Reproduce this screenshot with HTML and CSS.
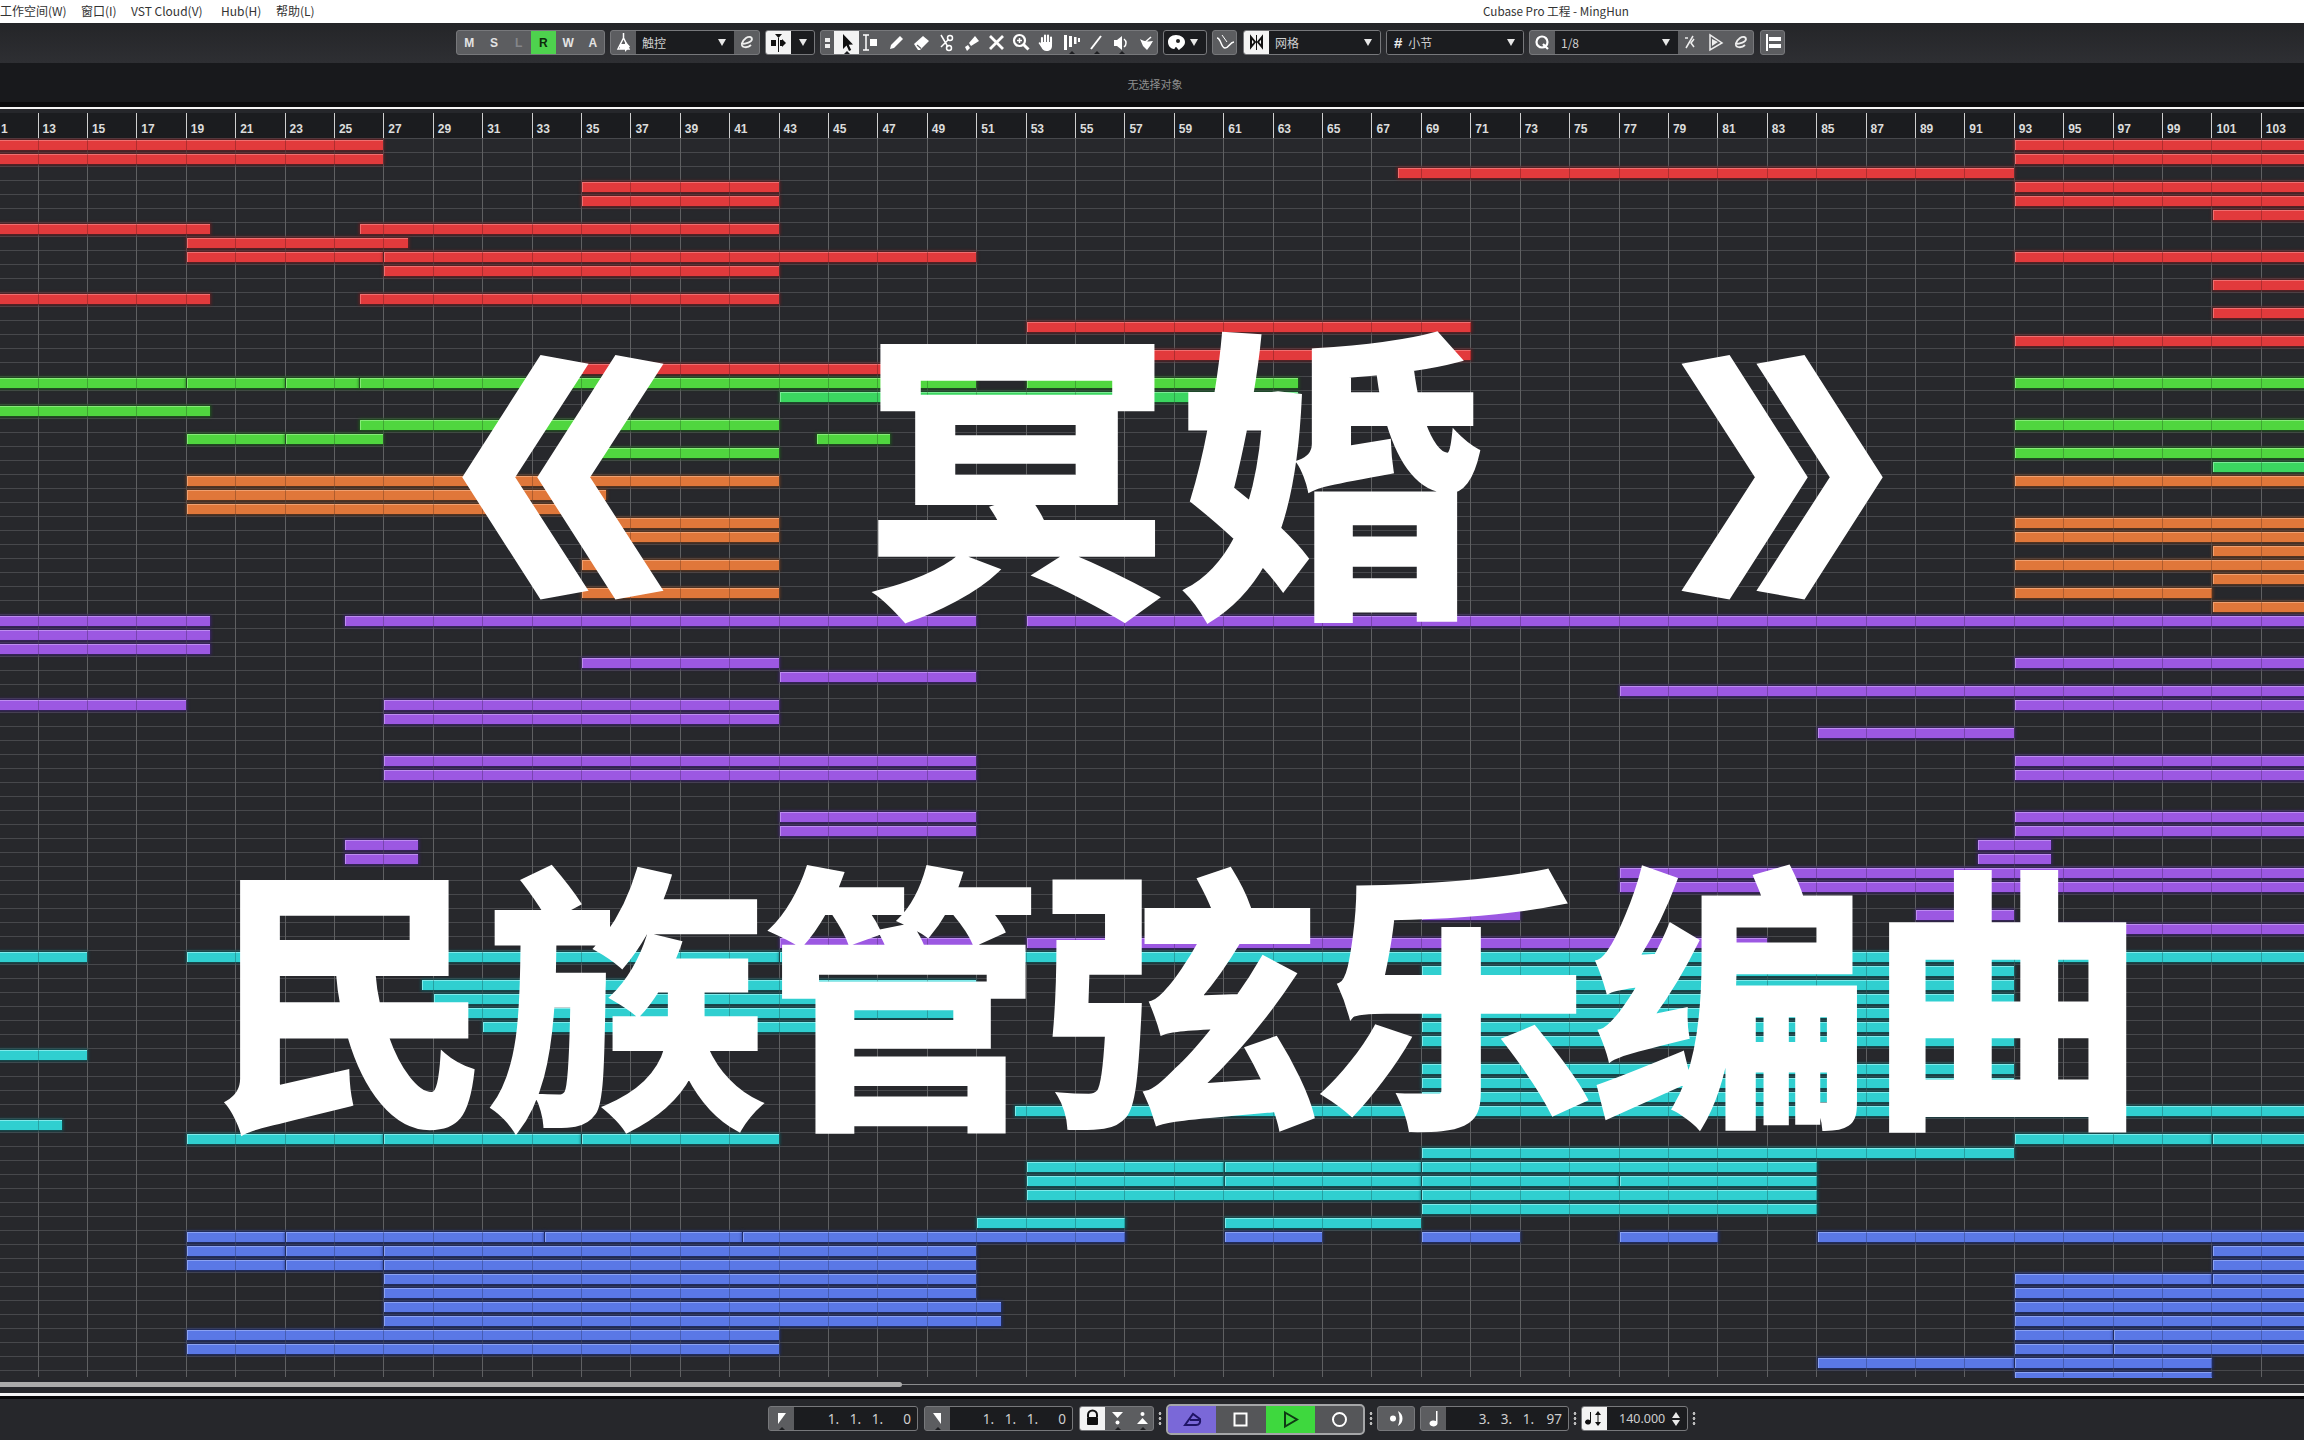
FILE: index.html
```html
<!DOCTYPE html>
<html lang="zh-CN">
<head>
    <meta charset="UTF-8">
    <title>Cubase Pro 工程 - MingHun</title>
    <link rel="stylesheet" href="styles.css">
</head>
<body>
    <div class="window">
        <div class="menubar">
            <span class="menu m1">工作空间(W)</span>
            <span class="menu m2">窗口(I)</span>
            <span class="menu m3">VST Cloud(V)</span>
            <span class="menu m4">Hub(H)</span>
            <span class="menu m5">帮助(L)</span>
            <span class="app-title">Cubase Pro 工程 - MingHun</span>
        </div>

        <div class="toolbar">
            <div class="group w-msl">
                <span class="cell letter">M</span><span class="cell letter">S</span><span class="cell letter dim">L</span><span class="cell letter on">R</span><span class="cell letter">W</span><span class="cell letter">A</span>
            </div>
            <div class="group w-touch">
                <span class="cell"><svg width="25" height="25" viewBox="0 0 25 25"><path d="M12.5 3v6M12.5 8L7 19h11z" fill="none" stroke="#fff" stroke-width="1.5"/><path d="M9 14h5v-3l5 5.5-5 5.500v-3H9z" fill="#fff"/></svg></span>
                <span class="field grow">触控<i class="caret"></i></span>
                <span class="cell"><svg width="25" height="25" viewBox="0 0 25 25"><path d="M7 14c5 0 11-2 11-5 0-2-3-3-6-1-4 3-6 8-2 9 3 .7 6-1 7-2" fill="none" stroke="#eee" stroke-width="1.8"/></svg></span>
            </div>
            <div class="group w-split">
                <span class="cell white"><svg width="25" height="25" viewBox="0 0 25 25"><path d="M9 4h7l-3.500 4zM12 8h1v14h-1z" fill="#111"/><rect x="5" y="10" width="5" height="6" fill="#111"/><path d="M14 10h2v-1l4 4-4 4v-1h-2z" fill="#111"/></svg></span>
                <span class="field grow center"><i class="caret solo"></i></span>
            </div>
            <div class="group w-tools">
                <span class="cell handle"><i></i><i></i></span>
                <span class="cell white notch"><svg width="25" height="25" viewBox="0 0 25 25"><path d="M9 4v15l3.500-3.500 2.500 5.500 2.200-1-2.500-5.200 4.300-.3z" fill="#111"/></svg></span>
                <span class="cell"><svg width="25" height="25" viewBox="0 0 25 25"><path d="M4 5h6M7 5v15M4 20h6" fill="none" stroke="#fff" stroke-width="1.500"/><rect x="11" y="9" width="7" height="7" fill="#fff"/></svg></span>
                <span class="cell"><svg width="25" height="25" viewBox="0 0 25 25"><path d="M6 19l1-4 9-9 3 3-9 9z" fill="#fff"/></svg></span>
                <span class="cell"><svg width="25" height="25" viewBox="0 0 25 25"><path d="M5 14l9-8 6 5-9 9h-2z" fill="#fff"/><path d="M8 15l4 3.500" stroke="#5c5d60" stroke-width="1.200"/></svg></span>
                <span class="cell"><svg width="25" height="25" viewBox="0 0 25 25"><circle cx="16" cy="8" r="2.500" fill="none" stroke="#fff" stroke-width="1.500"/><circle cx="15" cy="18" r="2.500" fill="none" stroke="#fff" stroke-width="1.500"/><path d="M7 5l7 12M7 17l8-8" stroke="#fff" stroke-width="1.500"/></svg></span>
                <span class="cell"><svg width="25" height="25" viewBox="0 0 25 25"><path d="M10 13l6-7 4 5-8 5z" fill="#fff"/><path d="M6 17l3-2 2 3-3 3z" fill="#fff"/></svg></span>
                <span class="cell"><svg width="25" height="25" viewBox="0 0 25 25"><path d="M6 6l13 13M19 6L6 19" stroke="#fff" stroke-width="2.800"/></svg></span>
                <span class="cell"><svg width="25" height="25" viewBox="0 0 25 25"><circle cx="10.500" cy="10.500" r="5.500" fill="none" stroke="#fff" stroke-width="2.200"/><path d="M14.500 14.500l5 5" stroke="#fff" stroke-width="3"/><path d="M8 10.500h5M10.500 8v5" stroke="#fff" stroke-width="1.500"/></svg></span>
                <span class="cell"><svg width="25" height="25" viewBox="0 0 25 25"><path d="M8 8v6M11 5.500V13M14 5.500V13M17 7.500V14" fill="none" stroke="#fff" stroke-width="2.100" stroke-linecap="round"/><path d="M7 12h11v4c0 3-2 5-5.500 5-2.500 0-4-1.500-5-3.500L4.500 13l1.500-1 1 1.500z" fill="#fff"/></svg></span>
                <span class="cell notch"><svg width="25" height="25" viewBox="0 0 25 25"><path d="M5 5h3v15H5zM10 6h3v11h-3zM15 7h2.500v7H15zM19 8h2v4h-2z" fill="#fff"/></svg></span>
                <span class="cell notch"><svg width="25" height="25" viewBox="0 0 25 25"><path d="M7 19L17 6" stroke="#fff" stroke-width="2"/></svg></span>
                <span class="cell notch"><svg width="25" height="25" viewBox="0 0 25 25"><path d="M5 10h3l5-4v14l-5-4H5z" fill="#fff"/><path d="M15 9a5 5 0 010 8" fill="none" stroke="#fff" stroke-width="1.500"/></svg></span>
                <span class="cell"><svg width="25" height="25" viewBox="0 0 25 25"><path d="M6 9c3 2 7 3 13 2l-3 5-3 4-4-4z" fill="#fff"/><path d="M9 14l8-7" stroke="#fff" stroke-width="1.500"/></svg></span>
            </div>
            <div class="group w-face plain">
                <span class="cell"><svg width="25" height="25" viewBox="0 0 25 25"><path d="M12 5c-5 0-8 3-8 7s3 7 6 7c1 0 1-2 2-2s2 3 3 3c2-2 6-4 6-8 0-4-4-7-9-7z" fill="#fff"/><circle cx="14" cy="11" r="2" fill="#222"/></svg></span>
                <i class="caret solo"></i>
            </div>
            <div class="group w-auto">
                <span class="cell"><svg width="25" height="25" viewBox="0 0 25 25"><path d="M4 8c4 0 4 10 8 10s5-6 9-6" fill="none" stroke="#fff" stroke-width="1.500"/><path d="M9 5l5 7" stroke="#fff" stroke-width="1"/></svg></span>
            </div>
            <div class="group w-grid plain">
                <span class="cell white"><svg width="25" height="25" viewBox="0 0 25 25"><path d="M12 5h1v15h-1z" fill="#111"/><path d="M7 7l4 5-4 5zM18 7l-4 5 4 5z" fill="none" stroke="#111" stroke-width="2"/></svg></span>
                <span class="field grow">网格<i class="caret"></i></span>
            </div>
            <div class="group w-grid plain">
                <span class="field grow"><span class="hash">#</span>小节<i class="caret"></i></span>
            </div>
            <div class="group w-quant">
                <span class="cell q"><svg width="25" height="25" viewBox="0 0 25 25"><circle cx="12" cy="12" r="5.500" fill="none" stroke="#fff" stroke-width="2.200"/><path d="M13 14l5 5" stroke="#fff" stroke-width="2.200"/></svg></span>
                <span class="field grow">1/8<i class="caret"></i></span>
                <span class="cell"><svg width="25" height="25" viewBox="0 0 25 25"><path d="M7 8h3M16 17l-3-4 3-4M8 18L15 6" fill="none" stroke="#eee" stroke-width="1.500"/></svg></span>
                <span class="cell"><svg width="25" height="25" viewBox="0 0 25 25"><path d="M7 5v15l12-7z" fill="none" stroke="#eee" stroke-width="1.500"/><path d="M9 9l6 3-6 4z" fill="#eee"/></svg></span>
                <span class="cell"><svg width="25" height="25" viewBox="0 0 25 25"><path d="M7 14c5 0 11-2 11-5 0-2-3-3-6-1-4 3-6 8-2 9 3 .7 6-1 7-2" fill="none" stroke="#eee" stroke-width="1.800"/></svg></span>
            </div>
            <div class="group w-auto last">
                <span class="cell"><svg width="25" height="25" viewBox="0 0 25 25"><path d="M5 4h2v17H5z" fill="#fff"/><rect x="8" y="7" width="12" height="4" fill="#fff"/><rect x="8" y="14" width="12" height="4" fill="#fff"/></svg></span>
            </div>
        </div>

        <div class="infobar">无选择对象</div>
        <div class="rule"></div>

        <div class="ruler-wrap"><div class="ruler" id="ruler"></div></div>

        <div class="roll" id="roll">
            <div class="columns" id="columns"></div>
            <div id="notes"></div>
            <div class="columns tint" id="tint"></div>
            <div class="big-title">
                <span class="bracket left">《</span>
                <span class="name n1">冥</span>
                <span class="name n2">婚</span>
                <span class="bracket right">》</span>
            </div>
            <div class="big-sub">
                <span>民</span><span>族</span><span>管</span><span>弦</span><span>乐</span><span>编</span><span>曲</span>
            </div>
        </div>

        <div class="scroller"><div class="thumb"></div></div>
        <div class="rule bottom"></div>

        <div class="transport">
            <div class="group w-loc">
                <span class="cell icon notch"><svg width="25" height="25" viewBox="0 0 25 25"><path d="M9 7h8L9 18z" fill="#fff"/></svg></span>
                <span class="numbers"><b>1.</b><b>1.</b><b>1.</b><b class="tail">0</b></span>
            </div>
            <div class="group w-loc two">
                <span class="cell icon notch"><svg width="25" height="25" viewBox="0 0 25 25"><path d="M8 7h8v11z" fill="#fff"/></svg></span>
                <span class="numbers"><b>1.</b><b>1.</b><b>1.</b><b class="tail">0</b></span>
            </div>
            <div class="group w-lock">
                <span class="cell white"><svg width="25" height="25" viewBox="0 0 25 25"><path d="M8 11V9a4.500 4.500 0 019 0v2" fill="none" stroke="#111" stroke-width="2"/><rect x="7" y="11" width="11" height="8" rx="1" fill="#111"/></svg></span>
                <span class="cell notch"><svg width="25" height="25" viewBox="0 0 25 25"><path d="M7 6h11l-5.500 6z" fill="#fff"/><circle cx="12.500" cy="16.500" r="2" fill="#fff"/></svg></span>
                <span class="cell notch"><svg width="25" height="25" viewBox="0 0 25 25"><circle cx="12.500" cy="8" r="2" fill="#fff"/><path d="M7 18h11l-5.500-6z" fill="#fff"/></svg></span>
            </div>
            <span class="dots"></span>
            <div class="group w-play">
                <span class="key cycle"><svg width="25" height="25" viewBox="0 0 25 25"><path d="M5 18L13 7l7 5q1 6-4 6zM10 13h9" fill="none" stroke="#1f1466" stroke-width="2"/></svg></span>
                <span class="key"><svg width="25" height="25" viewBox="0 0 25 25"><rect x="6.500" y="6.500" width="12" height="12" fill="none" stroke="#fff" stroke-width="2"/></svg></span>
                <span class="key play"><svg width="25" height="25" viewBox="0 0 25 25"><path d="M7 5.500l12 7-12 7z" fill="none" stroke="#0f3a14" stroke-width="2"/></svg></span>
                <span class="key"><svg width="25" height="25" viewBox="0 0 25 25"><circle cx="12.500" cy="12.500" r="6.500" fill="none" stroke="#fff" stroke-width="2"/></svg></span>
            </div>
            <span class="dots"></span>
            <div class="group w-sync">
                <span class="cell wide"><svg width="25" height="25" viewBox="0 0 25 25"><circle cx="9" cy="12.500" r="3" fill="#fff"/><path d="M14 5c6 3 6 12 0 15 2-5 2-10 0-15z" fill="#fff"/></svg></span>
            </div>
            <div class="group w-time">
                <span class="cell icon"><svg width="25" height="25" viewBox="0 0 25 25"><path d="M15 5h1.500v12.500a4 3 0 11-1.500-2.400z" fill="#fff"/></svg></span>
                <span class="numbers"><b>3.</b><b>3.</b><b>1.</b><b class="tail">97</b></span>
            </div>
            <span class="dots"></span>
            <div class="group w-tempo">
                <span class="cell white"><svg width="25" height="25" viewBox="0 0 25 25"><path d="M8 6h1v10a3 2.500 0 11-1-1.800z" fill="#111"/><path d="M16 5l3 4h-6zM16 20l3-4h-6z" fill="#111"/><path d="M15.500 8h1v9h-1z" fill="#111"/></svg></span>
                <span class="tempo">140.000</span>
                <span class="stepper"><i class="up"></i><i class="down"></i></span>
            </div>
            <span class="dots"></span>
        </div>
    </div>
    <script src="script.js"></script>
</body>
</html>
```

FILE: styles.css
```css
* { box-sizing: border-box; }
html, body { margin: 0; padding: 0; background: #27282c; }
body {
    width: 2304px;
    height: 1440px;
    overflow: hidden;
    font-family: "Noto Sans", "Noto Sans CJK SC", sans-serif;
}
.window { display: flex; flex-direction: column; height: 1440px; }

/* title + menu */
.menubar {
    height: 23px;
    flex: none;
    position: relative;
    background: #fff;
    color: #333;
    font-size: 12px;
    line-height: 22px;
    font-family: "Noto Sans CJK SC", "Noto Sans", sans-serif;
}
.menu { position: absolute; top: 0; white-space: nowrap; }
.m1 { left: 0; }
.m2 { left: 81px; }
.m3 { left: 131px; }
.m4 { left: 221px; }
.m5 { left: 276px; }
.app-title { position: absolute; left: 1483px; top: 0; white-space: nowrap; font-size: 11.700px; }

/* upper toolbar */
.toolbar {
    height: 40px;
    flex: none;
    display: flex;
    align-items: flex-start;
    gap: 5px;
    padding: 7px 0 0 456px;
    background: linear-gradient(#242528, #2e2f33);
}
.group {
    height: 25px;
    display: flex;
    flex: none;
    overflow: hidden;
    background: #5c5d60;
    border: 1px solid #77787b;
    border-radius: 3px;
}
.group.plain { background: #1b1c1f; }
.cell {
    width: 25px;
    flex: none;
    display: flex;
    align-items: center;
    justify-content: center;
    position: relative;
}
.cell svg { flex: none; margin: -1px; }
.letter { width: 24.700px; color: #e4e4e4; font: bold 12px "Liberation Sans", sans-serif; }
.letter.dim { color: #85868a; }
.letter.on { background: #4ed24e; color: #0c2a0c; }
.white { background: #f3f3f3; }
.handle { width: 13px; flex-direction: column; gap: 2px; }
.handle i { width: 5px; height: 4px; background: #eee; }
.notch::after {
    content: "";
    position: absolute;
    left: 50%;
    bottom: 0;
    margin-left: -3px;
    border: 3px solid transparent;
    border-top: 0;
    border-bottom-color: #1d1e21;
}
.field {
    display: flex;
    align-items: center;
    position: relative;
    background: #1b1c1f;
    color: #cfcfcf;
    font: 12px "Noto Sans CJK SC", "Noto Sans", sans-serif;
    padding-left: 6px;
}
.grow { flex: 1; }
.center { padding: 0; justify-content: center; }
.caret {
    position: absolute;
    right: 8px;
    top: 8px;
    border: 4px solid transparent;
    border-top: 7px solid #e8e8e8;
    border-bottom: 0;
}
.caret.solo { position: static; }
.hash { color: #eee; font: bold 15px "Liberation Sans", sans-serif; margin: 0 6px 0 1px; }
.w-msl { width: 149px; }
.w-touch { width: 150px; }
.w-split { width: 50px; }
.w-tools { width: 338px; }
.w-face { width: 44px; align-items: center; gap: 1px; }
.w-auto { width: 25px; margin-right: 1px; }
.w-auto.last { margin-left: 1px; }
.w-grid { width: 138px; }
.w-quant { width: 225px; }

/* info line + dividers */
.infobar {
    height: 39px;
    flex: none;
    background: #18191c;
    color: #8f8f8f;
    font: 11px "Noto Sans CJK SC", sans-serif;
    text-align: center;
    padding-top: 13px;
    padding-right: 0;
    padding-left: 6px;
}
.rule { height: 7px; flex: none; border-top: 5px solid #0a0a0c; background: #f4f4f4; }
.rule.bottom { height: 6px; border-top: 0; border-bottom: 3px solid #050506; }

/* bar ruler */
.ruler-wrap { height: 29px; flex: none; padding-top: 4px; background: #26272b; overflow: hidden; }
.ruler { display: flex; height: 25px; margin-left: -11.920px; background: #1b1c1f; width: 2316px; }
.tick {
    width: 49.420px;
    flex: none;
    border-left: 1px solid #cfcfcf;
    padding: 9px 0 0 4px;
    color: #dcdcdc;
    font: bold 12px/14px "Liberation Sans", sans-serif;
}
.tick.first { padding-left: 12px; }

/* piano roll */
.roll {
    height: 1240px;
    flex: none;
    position: relative;
    overflow: hidden;
    background: repeating-linear-gradient(#47484c 0 1px, transparent 1px 14px) #27282c;
}
.columns {
    position: absolute;
    left: -11.920px;
    top: 0;
    bottom: 1px;
    display: flex;
}
.column { width: 49.420px; flex: none; border-left: 1px solid #7a7b7e; }
.tint .column { border-left-color: rgba(0, 0, 0, .22); }
.note {
    position: absolute;
    height: 10px;
    background: var(--fill);
    border-top: 1px solid var(--light);
    border-left: 1px solid var(--light);
    box-shadow: 0 0 3px 1px var(--edge);
}
.red { --fill: #e23a3c; --light: #ef6f70; --edge: #6e1f22; }
.green { --fill: #50d63f; --light: #86ea78; --edge: #1f5c1c; }
.mint { --fill: #3bd660; --light: #7bea95; --edge: #1c5c2c; }
.orange { --fill: #e0773a; --light: #f0a070; --edge: #6b3a1e; }
.purple { --fill: #9c58e2; --light: #bd8cf0; --edge: #3d2270; }
.cyan { --fill: #30cfd0; --light: #7feaea; --edge: #0f5a5e; }
.blue { --fill: #5a78e6; --light: #8ba2f2; --edge: #1f2f78; }

/* the big lettering lies over the roll */
.big-title, .big-sub {
    position: absolute;
    color: #fff;
    font-family: "Noto Sans CJK SC", sans-serif;
    font-weight: 700;
    line-height: 1;
    -webkit-text-stroke: 5px #fff;
}
.big-title { left: 0; top: 0; width: 2304px; height: 0; }
.big-title span { position: absolute; }
.bracket { font-size: 300px; top: 175px; transform: scale(1.380, .840); font-weight: 900; }
.bracket.left { left: 311px; }
.bracket.right { left: 1734px; }
.name { font-size: 305px; top: 170px; }
.n1 { left: 864px; }
.n2 { left: 1178px; }
.big-sub { left: 212px; top: 708px; display: flex; gap: 0; font-size: 278px; }
.big-sub span { width: 276px; text-align: center; }

/* scroll bar */
.scroller { height: 15px; flex: none; padding-top: 4px; background: linear-gradient(#8a8b8d, #8a8b8d) 0 6px / 100% 1px no-repeat #27282c; }
.thumb { width: 902px; height: 5px; background: #ababab; border-radius: 0 3px 3px 0; }

/* transport */
.transport {
    height: 41px;
    flex: none;
    display: flex;
    align-items: center;
    padding: 0 0 2px 768px;
    background: #26272b;
}
.w-loc { width: 150px; margin-right: 6px; }
.w-loc.two { width: 149px; }
.w-lock { width: 75px; }
.w-play { width: 199px; height: 31px; border: 2px solid #a5a6a8; border-radius: 5px; background: #555659; margin-top: 1px; }
.w-sync { width: 38px; margin-right: 5px; }
.w-time { width: 149px; }
.w-tempo { width: 107px; background: #1b1c1f; }
.icon { background: #5c5d60; }
.wide { width: 36px; }
.numbers {
    flex: 1;
    display: flex;
    justify-content: flex-end;
    align-items: center;
    background: #1b1c1f;
    color: #cfcfcf;
    font: 13.500px "Noto Sans", sans-serif;
    padding-right: 6px;
}
.numbers b { width: 22px; font-weight: 400; text-align: right; }
.numbers .tail { width: 28px; }
.key { width: 49.500px; flex: none; display: flex; align-items: center; justify-content: center; }
.cycle { background: #7a68d8; width: 48px; }
.play { background: #3ed83e; }
.dots { width: 12px; height: 16px; flex: none; background: radial-gradient(circle, #bbb 1.300px, transparent 1.600px) center top / 4px 5px repeat-y; }
.tempo { color: #cfcfcf; font: 12.500px "Noto Sans", sans-serif; margin: 0 0 0 12px; line-height: 23px; }
.stepper { display: flex; flex-direction: column; gap: 2px; justify-content: center; margin-left: 7px; }
.stepper i { border: 4px solid transparent; }
.stepper .up { border-top: 0; border-bottom: 6px solid #e8e8e8; }
.stepper .down { border-bottom: 0; border-top: 6px solid #e8e8e8; }
```

FILE: script.js
```javascript
// bar positions on screen: two bars are 49.42px wide
const barX = bar => 37.5 + (bar - 13) * 24.71;
const OFF_LEFT = 9;
const OFF_RIGHT = 113;

// [row, from bar, to bar]
const parts = {
    red: [
        [0, OFF_LEFT, 27], [0, 93, OFF_RIGHT], [1, OFF_LEFT, 27], [1, 93, OFF_RIGHT],
        [2, 68, 93], [3, 35, 43], [3, 93, OFF_RIGHT], [4, 35, 43], [4, 93, OFF_RIGHT],
        [5, 101, OFF_RIGHT], [6, OFF_LEFT, 20], [6, 26, 43], [7, 19, 28],
        [8, 19, 27], [8, 27, 51], [8, 93, OFF_RIGHT], [9, 27, 43], [10, 101, OFF_RIGHT],
        [11, OFF_LEFT, 20], [11, 26, 43], [12, 101, OFF_RIGHT], [13, 53, 71],
        [14, 93, OFF_RIGHT], [15, 53, 71], [16, 35, 51]
    ],
    green: [
        [17, OFF_LEFT, 19], [17, 19, 23], [17, 23, 26], [17, 26, 51], [17, 53, 64], [17, 93, OFF_RIGHT],
        [19, OFF_LEFT, 20], [20, 26, 43], [20, 93, OFF_RIGHT],
        [21, 19, 23], [21, 23, 27], [21, 44.500, 47.500], [22, 35, 43], [22, 93, OFF_RIGHT]
    ],
    mint: [[18, 43, 64], [23, 101, OFF_RIGHT]],
    orange: [
        [24, 19, 43], [24, 93, OFF_RIGHT], [25, 19, 36], [26, 19, 35],
        [27, 35, 43], [27, 93, OFF_RIGHT], [28, 35, 43], [28, 93, OFF_RIGHT], [29, 101, OFF_RIGHT],
        [30, 35, 43], [30, 93, OFF_RIGHT], [31, 101, OFF_RIGHT], [32, 35, 43], [32, 93, 101], [33, 101, OFF_RIGHT]
    ],
    purple: [
        [34, OFF_LEFT, 20], [34, 25.400, 51], [34, 53, OFF_RIGHT], [35, OFF_LEFT, 20], [36, OFF_LEFT, 20],
        [37, 35, 43], [37, 93, OFF_RIGHT], [38, 43, 51], [39, 77, OFF_RIGHT],
        [40, OFF_LEFT, 19], [40, 27, 43], [40, 93, OFF_RIGHT], [41, 27, 43], [42, 85, 93],
        [44, 27, 51], [44, 93, OFF_RIGHT], [45, 27, 51], [45, 93, OFF_RIGHT],
        [48, 43, 51], [48, 93, OFF_RIGHT], [49, 43, 51], [49, 93, OFF_RIGHT],
        [50, 25.400, 28.400], [50, 91.500, 94.500], [51, 25.400, 28.400], [51, 91.500, 94.500],
        [52, 77, OFF_RIGHT], [53, 77, OFF_RIGHT], [55, 69, 73], [55, 89, 93], [56, 93, OFF_RIGHT],
        [57, 43, 51], [57, 53, 83]
    ],
    cyan: [
        [58, OFF_LEFT, 15], [58, 19, 43], [58, 43, OFF_RIGHT], [59, 69, 93],
        [60, 28.500, 51], [60, 69, 93], [61, 29, 51], [61, 69, 93], [62, 29, 51], [62, 69, 93],
        [63, 31, 51], [63, 69, 93], [64, 69, 93], [65, OFF_LEFT, 15], [66, 69, 93], [67, 69, 93], [68, 69, 93],
        [69, 52.500, OFF_RIGHT], [70, OFF_LEFT, 14],
        [71, 19, 27], [71, 27, 35], [71, 35, 43], [71, 93, 101], [71, 101, OFF_RIGHT], [72, 69, 93],
        [73, 53, 61], [73, 61, 69], [73, 69, 85], [74, 53, 61], [74, 61, 69], [74, 69, 77], [74, 77, 85],
        [75, 53, 69], [75, 69, 85], [76, 69, 85], [77, 51, 57], [77, 61, 69]
    ],
    blue: [
        [78, 19, 23], [78, 23, 33.500], [78, 33.500, 41.500], [78, 41.500, 57], [78, 61, 65], [78, 69, 73], [78, 77, 81], [78, 85, OFF_RIGHT],
        [79, 19, 23], [79, 23, 27], [79, 27, 51], [79, 101, OFF_RIGHT],
        [80, 19, 23], [80, 23, 27], [80, 27, 51], [80, 101, OFF_RIGHT],
        [81, 27, 51], [81, 93, 101], [81, 101, OFF_RIGHT], [82, 27, 51], [82, 93, OFF_RIGHT],
        [83, 27, 52], [83, 93, OFF_RIGHT], [84, 27, 52], [84, 93, OFF_RIGHT],
        [85, 19, 43], [85, 93, 97], [85, 97, OFF_RIGHT], [86, 19, 43], [86, 93, 97], [86, 97, OFF_RIGHT],
        [87, 85, 93], [87, 93, 101], [88, 93, 101]
    ]
};

function fillBars() {
    const ruler = document.getElementById('ruler');
    const lower = document.getElementById('columns');
    const upper = document.getElementById('tint');
    for (let bar = 11; bar <= 103; bar += 2) {
        const tick = document.createElement('div');
        // only the last digit of bar 11 is still on screen
        tick.className = bar === 11 ? 'tick first' : 'tick';
        tick.innerText = bar === 11 ? 1 : bar;
        ruler.appendChild(tick);
        [lower, upper].forEach(layer => {
            const col = document.createElement('div');
            col.className = 'column';
            layer.appendChild(col);
        });
    }
}

function fillNotes() {
    const holder = document.getElementById('notes');
    Object.keys(parts).forEach(colour => {
        parts[colour].forEach(([row, from, to]) => {
            const note = document.createElement('div');
            note.className = `note ${colour}`;
            note.style.top = `${row * 14 + 2}px`;
            note.style.left = `${barX(from) + 1}px`;
            note.style.width = `${barX(to) - barX(from) - 1}px`;
            holder.appendChild(note);
        });
    });
}

fillBars();
fillNotes();
```
